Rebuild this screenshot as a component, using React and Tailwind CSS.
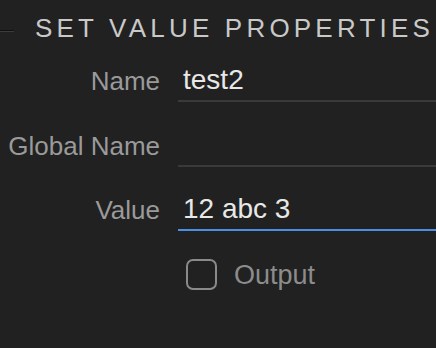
import React from 'react';

const rows = [
    { label: 'Name', value: 'test2', rowH: 'h-[59px]' },
    { label: 'Global Name', value: '', rowH: 'h-[65px]' },
    { label: 'Value', value: '12 abc 3', rowH: 'h-[64px]', active: true },
];

const App = () => {
    return (
        <div className="w-[436px] h-[348px] overflow-hidden bg-[#212121] pt-[13px] font-['Liberation_Sans',Arial,sans-serif]">
            {/* Section header */}
            <div className="flex items-start whitespace-nowrap">
                <div className="w-[14px] h-[2px] mt-[17px] shrink-0 border-t border-[#111] bg-[#3c3c3c]"></div>
                <h2 className="ml-[21px] text-[26px] leading-[30px] tracking-[4.2px] text-[#c9c9c9] font-normal">
                    SET VALUE PROPERTIES
                </h2>
            </div>

            {/* Fields */}
            <div className="flex flex-col">
                {rows.map((row) => (
                    <div key={row.label} className={`flex items-end ${row.rowH}`}>
                        <label className="w-[160px] shrink-0 text-right text-[26px] leading-[30px] pb-[6px] text-[#9a9a9a] whitespace-nowrap">
                            {row.label}
                        </label>
                        <div
                            className={`ml-[18px] flex-1 h-[46px] flex items-end pl-[5px] pb-[4px] border-b-2 text-[28px] leading-[32px] text-[#e8e8e8] ${
                                row.active ? 'border-[#4a8fe2]' : 'border-[#3a3a3a]'
                            }`}
                        >
                            {row.value}
                        </div>
                    </div>
                ))}
            </div>

            {/* Output checkbox */}
            <div className="flex items-center ml-[186px] mt-[28px]">
                <div className="w-[31px] h-[31px] rounded-[7px] border-2 border-[#8a8a8a] shrink-0"></div>
                <span className="ml-[17px] text-[27px] leading-[30px] text-[#8c8c8c]">Output</span>
            </div>
        </div>
    );
};

export default App;
